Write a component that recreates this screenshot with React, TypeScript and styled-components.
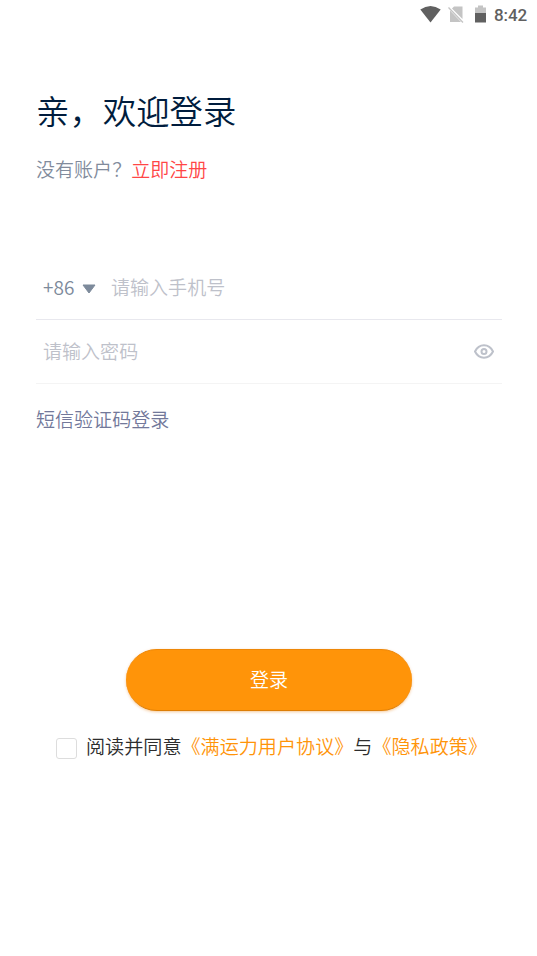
import React from "react";
import styled, { createGlobalStyle } from "styled-components";

const Global = createGlobalStyle`
  * { box-sizing: border-box; }
  body { margin: 0; background: #fff; }
  button, input { font: inherit; }
`;
const Page = styled.main`
  height: 956px;
  overflow: hidden;
  background: #fff;
  font-family: "Noto Sans CJK SC", sans-serif;
  font-size: 19.05px;
  font-weight: 350;
  line-height: 28px;
  white-space: nowrap;
`;
const StatusBar = styled.header`
  height: 30px;
  padding-right: 10px;
  display: flex;
  justify-content: flex-end;
  align-items: center;
`;
const StatusIcons = styled.svg`
  width: 70px;
  height: 20px;
  margin-right: 4px;
`;
const Clock = styled.time`
  font: 500 17px/30px Roboto, sans-serif;
  letter-spacing: -0.1px;
  width: 33px;
  color: #606060;
`;
const Content = styled.section`
  padding: 56px 35px 0 36px;
`;
const Title = styled.h1`
  margin: 0;
  font-size: 33.4px;
  font-weight: 350;
  line-height: 48px;
  color: #001c3d;
`;
const Hint = styled.p`
  margin: 21px 0 0;
  color: #818b9c;
`;
const Register = styled.a`
  color: #ff4646;
`;
const Fields = styled.form`
  margin-top: 73px;
`;
const Field = styled.label<{ $line: string }>`
  height: 64px;
  padding: 0 8px 0 7px;
  display: flex;
  align-items: center;
  border-bottom: 1px solid ${(p) => p.$line};
`;
const Prefix = styled.span`
  width: 68px;
  padding-bottom: 2px;
  display: flex;
  align-items: center;
  gap: 7px;
  color: #7d8a9b;
`;
const Caret = styled.svg`
  width: 14px;
  height: 10px;
  margin: 4px 0 0 1px;
`;
const Input = styled.input`
  flex: 1;
  min-width: 0;
  padding: 0 0 1px;
  border: 0;
  outline: 0;
  background: transparent;
  &::placeholder { color: #bec1ca; opacity: 1; }
`;
const SmsLogin = styled.a`
  display: block;
  margin-top: 21px;
  color: #72789a;
`;
const Actions = styled.section`
  margin-top: 216px;
`;
const LoginButton = styled.button`
  display: block;
  width: 286px;
  height: 62px;
  margin: 0 auto 0 126px;
  padding: 0 0 2px;
  border: 0;
  border-top: 1px solid #ed8708;
  border-bottom: 1px solid #dd7e05;
  border-radius: 31px;
  background: #ff9409;
  color: #fff;
  box-shadow: 0 1px 3px rgba(230, 120, 0, 0.4);
`;
const Agreement = styled.div`
  margin-top: 21px;
  padding-left: 56px;
  display: flex;
  align-items: center;
  font-size: 19.1px;
  color: #2d2d2d;
`;
const Checkbox = styled.input`
  appearance: none;
  width: 21px;
  height: 21px;
  margin: 4px 9px 0 0;
  border: 1px solid #ddd;
  border-radius: 3px;
`;
const Policy = styled.a`
  color: #ff9409;
`;

export default function App() {
  return (
    <Page>
      <Global />
      <StatusBar>
        <StatusIcons viewBox="0 0 70 20">
          <path d="M0.300 4.500Q10.500 -2.500 20.700 4.500L10.500 17.500Z" fill="#606060" />
          <path d="M34 1.500h8.500v12.500L32 3.500ZM30 5.500L41 17H30Z" fill="#c4c4c4" />
          <path d="M28.500 2.500l14.500 15" stroke="#c4c4c4" strokeWidth="1.300" />
          <path d="M55 2.500h3V0.500h5v2h3v5.500H55Z" fill="#c4c4c4" />
          <path d="M55 8h11v9.500H55Z" fill="#606060" />
        </StatusIcons>
        <Clock>8:42</Clock>
      </StatusBar>
      <Content>
        <Title>亲，欢迎登录</Title>
        <Hint>没有账户？<Register>立即注册</Register></Hint>
        <Fields>
          <Field $line="#e8e8ee">
            <Prefix>+86
              <Caret viewBox="0 0 14 10"><path d="M1 1h12L7 9Z" fill="#7d8a9b" stroke="#7d8a9b" strokeLinejoin="round" /></Caret>
            </Prefix>
            <Input type="tel" placeholder="请输入手机号" />
          </Field>
          <Field $line="#f4f4f4">
            <Input type="password" placeholder="请输入密码" />
            <svg width="20" height="16" viewBox="0 0 20 16" fill="none" stroke="#bdc1ca" strokeWidth="2"><path d="M1 7.500C5 -0.700 15 -0.700 19 7.500C15 15.700 5 15.700 1 7.500Z" /><circle cx="10" cy="7.500" r="2.500" /></svg>
          </Field>
        </Fields>
        <SmsLogin>短信验证码登录</SmsLogin>
      </Content>
      <Actions>
        <LoginButton>登录</LoginButton>
        <Agreement>
          <Checkbox type="checkbox" aria-label="阅读并同意" />
          <span>阅读并同意<Policy>《满运力用户协议》</Policy>与<Policy>《隐私政策》</Policy></span>
        </Agreement>
      </Actions>
    </Page>
  );
}
